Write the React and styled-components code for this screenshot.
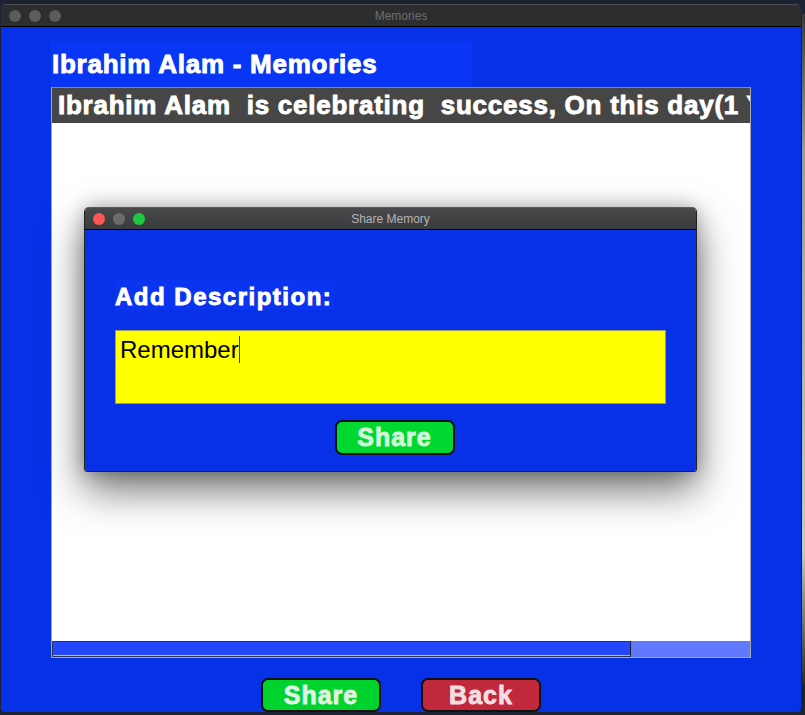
import React from "react";
import styled, { createGlobalStyle } from "styled-components";

const Global = createGlobalStyle`
  html, body { margin: 0; padding: 0; }
  body {
    background: #1c2232;
    width: 805px;
    height: 715px;
    overflow: hidden;
    font-family: "Liberation Sans", Arial, sans-serif;
  }
`;

const Page = styled.div`
  position: relative;
  width: 805px;
  height: 715px;
  padding: 4px 4px 0 1px;
  box-sizing: border-box;
`;

const Window = styled.div`
  width: 800px;
  height: 708px;
  display: flex;
  flex-direction: column;
  border-radius: 5px 5px 4px 4px;
  overflow: hidden;
  background: #0731e6;
`;

const TitleBar = styled.div`
  position: relative;
  height: 21px;
  flex: 0 0 21px;
  background: ${(p) => (p.$dialog ? "linear-gradient(#48494b, #3a3b3d)" : "#2c2d2f")};
  border-bottom: 1px solid #000;
  display: flex;
  align-items: center;
  justify-content: center;
  border-top: 1px solid ${(p) => (p.$dialog ? "#5a5b5d" : "#4a4b4d")};
  box-sizing: content-box;
`;

const Lights = styled.div`
  position: absolute;
  left: ${(p) => p.$left}px;
  top: 0;
  bottom: 0;
  display: flex;
  align-items: center;
  gap: 8px;
`;

const Light = styled.span`
  width: 12px;
  height: 12px;
  border-radius: 50%;
  background: ${(p) => p.$c};
`;

const TitleText = styled.span`
  font-family: "Liberation Sans", Arial, sans-serif;
  font-size: 12px;
  color: ${(p) => p.$c};
`;

const Body = styled.div`
  flex: 1;
  display: flex;
  flex-direction: column;
  padding: 14px 50px 1px 50px;
`;

const HeaderLabel = styled.div`
  align-self: flex-start;
  width: 420px;
  height: 46px;
  background: #0836f4;
  color: #fff;
  font-weight: bold;
  font-size: 26px;
  line-height: 46px;
  letter-spacing: 0.75px;
  padding-left: 1px;
  -webkit-text-stroke: 0.9px #fff;
  white-space: nowrap;
`;

const Panel = styled.div`
  height: 571px;
  box-sizing: border-box;
  border: 1px solid #a9a9a9;
  border-top-color: #8a8a8a;
  background: #fff;
  display: flex;
  flex-direction: column;
`;

const Banner = styled.div`
  height: 35px;
  flex: 0 0 35px;
  background: #464646;
  color: #fff;
  font-weight: bold;
  font-size: 26px;
  line-height: 35px;
  letter-spacing: 0.75px;
  padding-left: 6px;
  white-space: pre;
  overflow: hidden;
  -webkit-text-stroke: 0.9px #fff;
`;

const Content = styled.div`
  flex: 1;
  background: #fff;
`;

const Scrollbar = styled.div`
  height: 16px;
  flex: 0 0 16px;
  background: #6079ff;
  display: flex;
`;

const Thumb = styled.div`
  height: 100%;
  box-sizing: border-box;
  background: #2446ff;
  border: 1px solid #30344a;
  border-right-color: #1c1c2c;
  box-shadow: inset 0 -1px 0 #c0c0c0;
`;

const ButtonRow = styled.div`
  display: flex;
  justify-content: center;
  gap: 40px;
  margin-top: 20px;
`;

const Button = styled.button`
  width: ${(p) => p.$w || 120}px;
  height: ${(p) => p.$h || 34}px;
  box-sizing: border-box;
  border: 2px solid #111;
  border-radius: 7px;
  background: ${(p) => p.$bg};
  color: ${(p) => p.$fg};
  font-family: "Liberation Sans", Arial, sans-serif;
  font-weight: bold;
  font-size: 25px;
  letter-spacing: 1px;
  line-height: 1;
  padding: 0;
  display: flex;
  align-items: center;
  justify-content: center;
  -webkit-text-stroke: 0.9px ${(p) => p.$fg};
`;

const Dialog = styled.div`
  position: absolute;
  left: 84px;
  top: 207px;
  width: 613px;
  height: 265px;
  display: flex;
  flex-direction: column;
  border-radius: 5px 5px 3px 3px;
  overflow: hidden;
  border: 1px solid #222;
  border-top: none;
  box-sizing: border-box;
  box-shadow: 0 18px 40px rgba(0, 0, 0, 0.55), 0 0 18px rgba(0, 0, 0, 0.25);
`;

const DialogBody = styled.div`
  flex: 1;
  background: #0830e6;
  display: flex;
  flex-direction: column;
  padding: 50px 30px 16px 30px;
`;

const Label = styled.div`
  align-self: flex-start;
  width: 220px;
  height: 30px;
  background: #0a34ef;
  color: #fff;
  font-weight: bold;
  font-size: 24px;
  line-height: 34px;
  letter-spacing: 1.5px;
  -webkit-text-stroke: 0.9px #fff;
  white-space: nowrap;
`;

const TextBox = styled.div`
  margin-top: 20px;
  height: 74px;
  box-sizing: border-box;
  background: #ffff00;
  border: 1px solid #9a9a60;
  padding: 5px 4px;
  color: #000;
  font-size: 24px;
  line-height: 28px;
  display: flex;
  align-items: flex-start;
`;

const Caret = styled.span`
  display: inline-block;
  width: 1px;
  height: 27px;
  background: #1020ff;
`;

const DialogActions = styled.div`
  display: flex;
  justify-content: center;
  margin-top: 16px;
  padding-left: 8px;
`;

const Edge = styled.div`
  position: absolute;
  right: 0;
  top: 14px;
  width: 3px;
  height: 670px;
  background: linear-gradient(#3a3a3a, #9a9a9a 20%, #c8c8c0 80%, #2a2a2a);
`;

export default function App() {
  return (
    <>
      <Global />
      <Page>
        <Window>
          <TitleBar>
            <Lights $left={8}>
              <Light $c="#5b5c5e" />
              <Light $c="#5b5c5e" />
              <Light $c="#5b5c5e" />
            </Lights>
            <TitleText $c="#6d6e70">Memories</TitleText>
          </TitleBar>
          <Body>
            <HeaderLabel>Ibrahim Alam - Memories</HeaderLabel>
            <Panel>
              <Banner>{"Ibrahim Alam  is celebrating  success, On this day(1 Year ago)"}</Banner>
              <Content />
              <Scrollbar>
                <Thumb style={{ width: "83%" }} />
              </Scrollbar>
            </Panel>
            <ButtonRow>
              <Button $bg="#00d22e" $fg="#dff3e2" $w={120}>Share</Button>
              <Button $bg="#c1283c" $fg="#f2dde3" $w={120}>Back</Button>
            </ButtonRow>
          </Body>
        </Window>
        <Edge />
        <Dialog>
          <TitleBar $dialog>
            <Lights $left={8}>
              <Light $c="#fc5753" />
              <Light $c="#6a6b6d" />
              <Light $c="#1bc840" />
            </Lights>
            <TitleText $c="#b4b4b4">Share Memory</TitleText>
          </TitleBar>
          <DialogBody>
            <Label>Add Description:</Label>
            <TextBox>
              Remember<Caret />
            </TextBox>
            <DialogActions>
              <Button $bg="#00d830" $fg="#d0f7d8" $w={120} $h={35}>Share</Button>
            </DialogActions>
          </DialogBody>
        </Dialog>
      </Page>
    </>
  );
}
